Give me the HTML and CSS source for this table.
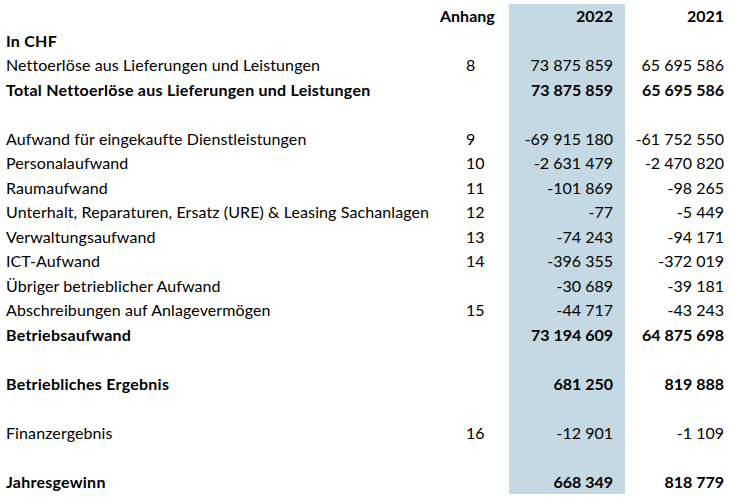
FILE: index.html
```html
<!DOCTYPE html>
<html lang="de">
<head>
<meta charset="utf-8">
<link rel="stylesheet" href="styles.css">
</head>
<body>
<table class="fin">
  <colgroup>
    <col class="c-label"><col class="c-note"><col class="c-cur"><col class="c-prev">
  </colgroup>
  <tr class="b"><td></td><td class="note-h">Anhang</td><td class="num cur">2022</td><td class="num">2021</td></tr>
  <tr class="b"><td class="label">In CHF</td><td></td><td class="cur"></td><td></td></tr>
  <tr><td class="label">Nettoerlöse aus Lieferungen und Leistungen</td><td class="note">8</td><td class="num cur">73 875 859</td><td class="num">65 695 586</td></tr>
  <tr class="b"><td class="label">Total Nettoerlöse aus Lieferungen und Leistungen</td><td></td><td class="num cur">73 875 859</td><td class="num">65 695 586</td></tr>
  <tr><td></td><td></td><td class="cur"></td><td></td></tr>
  <tr><td class="label">Aufwand für eingekaufte Dienstleistungen</td><td class="note">9</td><td class="num cur">-69 915 180</td><td class="num">-61 752 550</td></tr>
  <tr><td class="label">Personalaufwand</td><td class="note">10</td><td class="num cur">-2 631 479</td><td class="num">-2 470 820</td></tr>
  <tr><td class="label">Raumaufwand</td><td class="note">11</td><td class="num cur">-101 869</td><td class="num">-98 265</td></tr>
  <tr><td class="label">Unterhalt, Reparaturen, Ersatz (URE) &amp; Leasing Sachanlagen</td><td class="note">12</td><td class="num cur">-77</td><td class="num">-5 449</td></tr>
  <tr><td class="label">Verwaltungsaufwand</td><td class="note">13</td><td class="num cur">-74 243</td><td class="num">-94 171</td></tr>
  <tr><td class="label">ICT-Aufwand</td><td class="note">14</td><td class="num cur">-396 355</td><td class="num">-372 019</td></tr>
  <tr><td class="label">Übriger betrieblicher Aufwand</td><td class="note"></td><td class="num cur">-30 689</td><td class="num">-39 181</td></tr>
  <tr><td class="label">Abschreibungen auf Anlagevermögen</td><td class="note">15</td><td class="num cur">-44 717</td><td class="num">-43 243</td></tr>
  <tr class="b"><td class="label">Betriebsaufwand</td><td></td><td class="num cur">73 194 609</td><td class="num">64 875 698</td></tr>
  <tr><td></td><td></td><td class="cur"></td><td></td></tr>
  <tr class="b"><td class="label">Betriebliches Ergebnis</td><td></td><td class="num cur">681 250</td><td class="num">819 888</td></tr>
  <tr><td></td><td></td><td class="cur"></td><td></td></tr>
  <tr><td class="label">Finanzergebnis</td><td class="note">16</td><td class="num cur">-12 901</td><td class="num">-1 109</td></tr>
  <tr><td></td><td></td><td class="cur"></td><td></td></tr>
  <tr class="b"><td class="label">Jahresgewinn</td><td></td><td class="num cur">668 349</td><td class="num">818 779</td></tr>
</table>
</body>
</html>
```
FILE: styles.css
```css
html, body {
  margin: 0;
  padding: 0;
  background: #ffffff;
}
body {
  font-family: Lato, "Open Sans", "Liberation Sans", sans-serif;
  font-size: 16px;
  color: #000000;
}
.fin {
  border-collapse: collapse;
  table-layout: fixed;
  width: 732px;
  margin-top: 4px;
}
.c-label { width: 440px; }
.c-note { width: 69px; }
.c-cur { width: 116px; }
.c-prev { width: 107px; }
.fin td {
  height: 24.5px;
  padding: 0;
  white-space: nowrap;
  line-height: 24.5px;
}
.fin tr.b td { font-weight: 700; }
.label { padding-left: 6px !important; letter-spacing: 0.1px; }
.fin tr.b td.label { letter-spacing: 0.25px; }
.note { padding-left: 26px !important; }
.note-h { text-align: right; padding-right: 15px !important; }
.num { text-align: right; }
.cur { background: #c5d9e4; padding-right: 12px !important; }
.fin td.num:last-child { padding-right: 8px; }
```
